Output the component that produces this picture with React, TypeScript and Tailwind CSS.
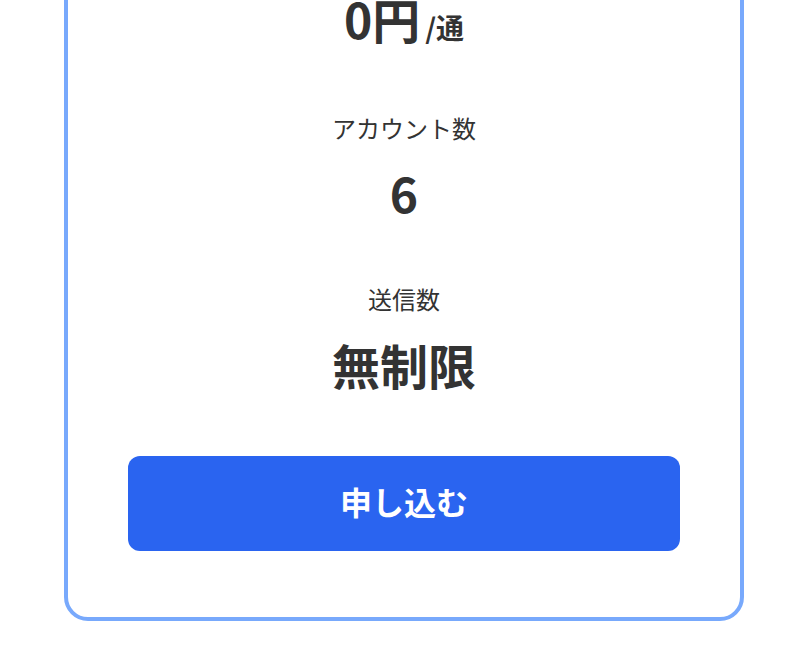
export default function App() {
  return (
    <div
      className="min-h-screen bg-white px-16 pb-[30px] text-[#333333]"
      style={{ fontFamily: '"Noto Sans CJK JP", "Noto Sans", sans-serif' }}
    >
      <div className="-mt-[50px] rounded-3xl border-4 border-[#78a9fc] bg-white px-[60px] pt-[40px] pb-[66px] text-center">
        <div className="flex items-baseline justify-center font-bold leading-[1.5]">
          <span className="text-5xl">0円</span>
          <span className="ml-[5px] text-[28px]">/通</span>
        </div>

        <p className="mt-[62px] text-2xl leading-[1.5]">アカウント数</p>
        <p className="mt-[10px] text-5xl font-bold leading-[1.5]">6</p>

        <p className="mt-[53px] text-2xl leading-[1.5]">送信数</p>
        <p className="mt-[11px] text-5xl font-bold leading-[1.5]">無制限</p>

        <button
          type="button"
          className="mt-[56px] flex h-[95px] w-full items-center justify-center rounded-xl bg-[#2a64f0] pb-[6px] text-[32px] font-bold text-white"
        >
          申し込む
        </button>
      </div>
    </div>
  );
}
